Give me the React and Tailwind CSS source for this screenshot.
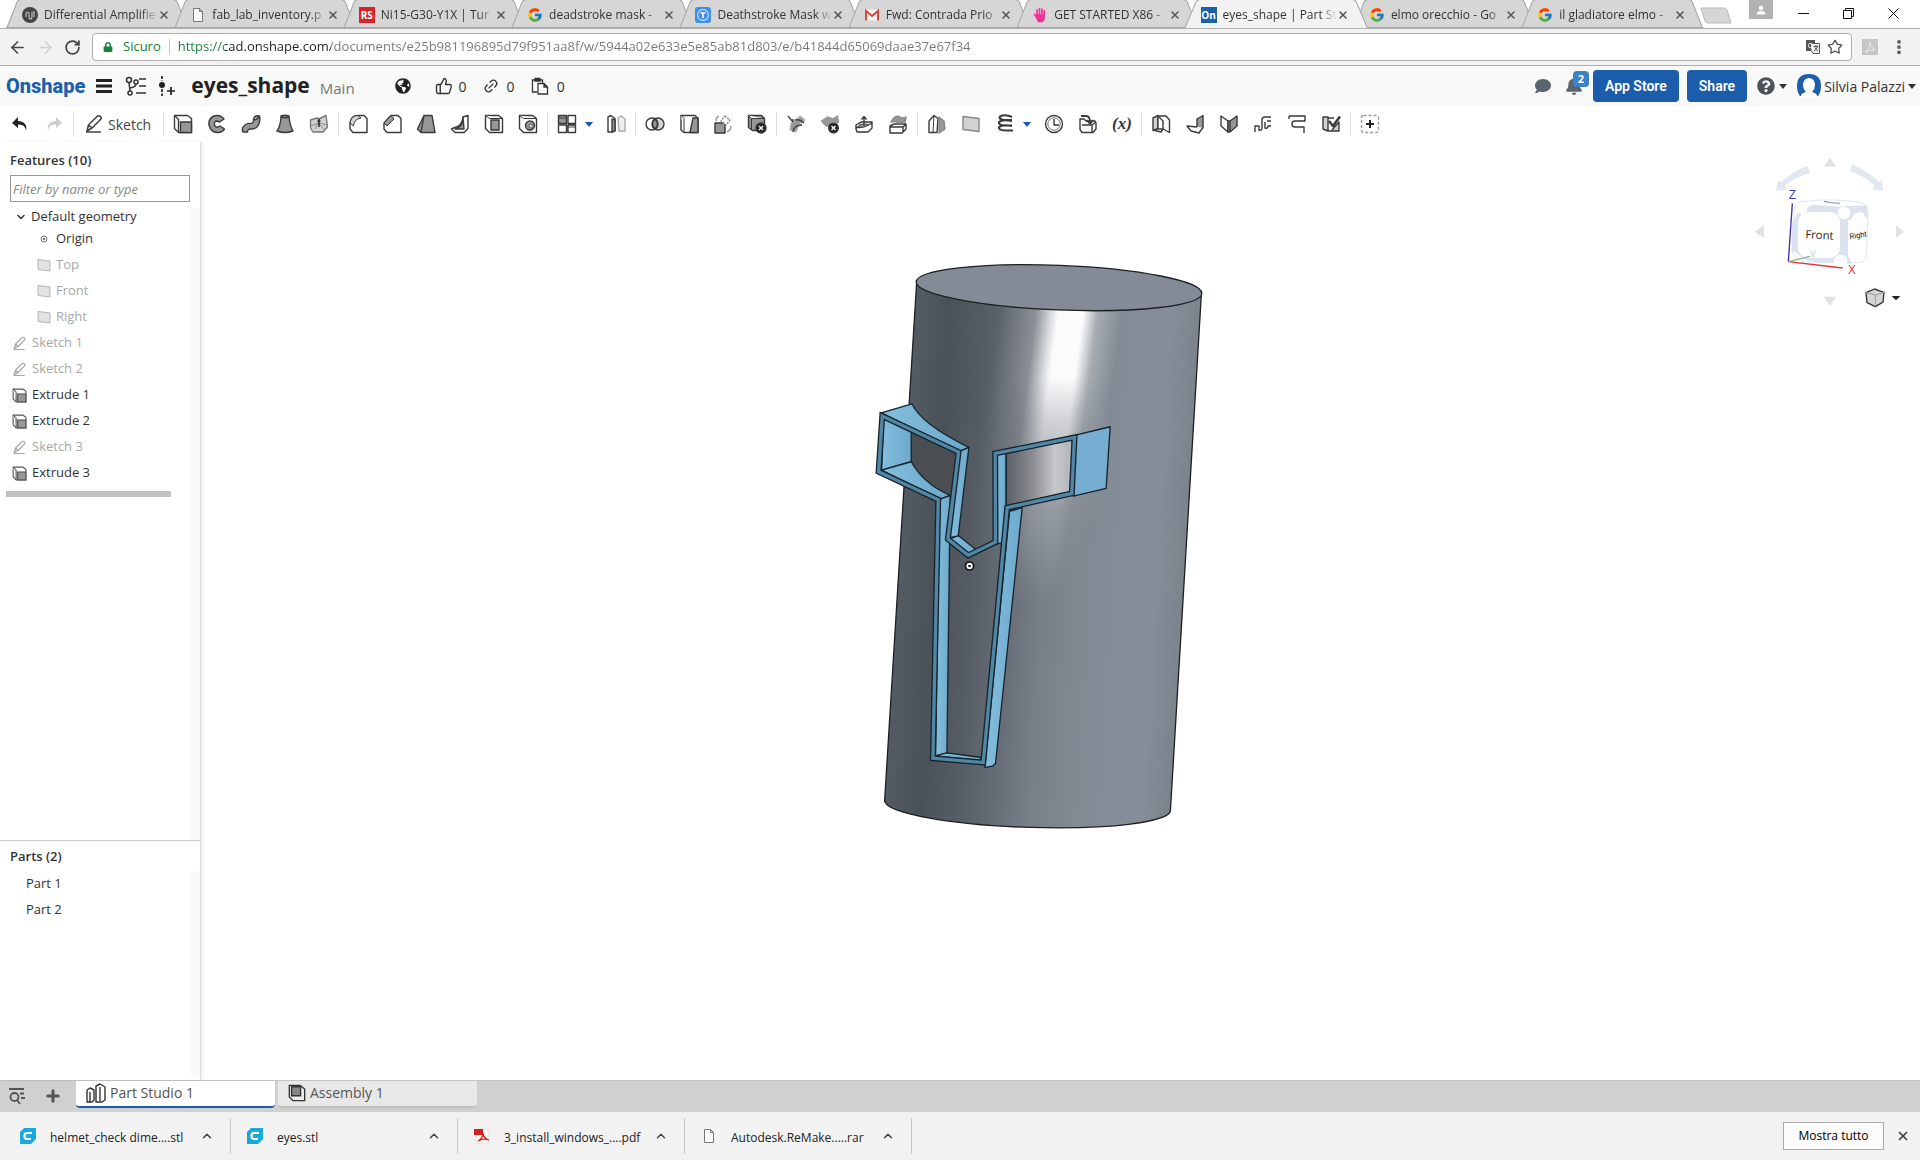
import React from "react";
import { FcGoogle } from "react-icons/fc";
import { FaGlobeAmericas, FaComment, FaBell, FaQuestionCircle, FaLock } from "react-icons/fa";
import { ArrowLeft, ArrowRight, RotateCw, Star, X, EllipsisVertical, ChevronUp, ChevronDown, Link2, Plus, ThumbsUp } from "lucide-react";

/* ---------- Browser chrome ---------- */

const PageIcon = () => (
  <svg viewBox="0 0 16 16" className="size-4 shrink-0" fill="#fafafa" stroke="#777" strokeWidth="1">
    <path d="M3.5 1.5h6l3 3v10h-9zM9.5 1.5v3h3" />
  </svg>
);
const WaveIcon = () => (
  <svg viewBox="0 0 16 16" className="size-4 shrink-0">
    <circle cx="8" cy="8" r="8" fill="#444" />
    <path d="M4 10V7q0-2 1.500-2T7 7v3q0 2 1.500 2T10 10V5M12 4v6" fill="none" stroke="#ccc" strokeWidth="1.1" />
  </svg>
);
const RsIcon = () => (
  <span className="flex size-4 shrink-0 items-center justify-center bg-[#d8232a] text-[10px] font-bold text-white">RS</span>
);
const ThingIcon = () => (
  <svg viewBox="0 0 16 16" className="size-4 shrink-0">
    <rect width="16" height="16" rx="3" fill="#3f8fe8" />
    <circle cx="8" cy="8" r="5.4" fill="none" stroke="#cfe4fb" strokeWidth="1.1" />
    <path d="M5.5 6h5M8 6v5" stroke="#fff" strokeWidth="1.6" />
  </svg>
);
const MailIcon = () => (
  <svg viewBox="0 0 16 16" className="size-4 shrink-0">
    <rect x="1" y="2.500" width="14" height="11" fill="#f2f2f2" />
    <path d="M2 13.500V4l6 5 6-5v9.500" fill="none" stroke="#d8473a" strokeWidth="2" />
  </svg>
);
const HandIcon = () => (
  <svg viewBox="0 0 16 16" className="size-4 shrink-0" stroke="#f0309a" strokeWidth="1.700" strokeLinecap="round" fill="#f0309a">
    <path d="M5 8V3M7.500 7V1.500M10 7V2M12.300 8V3.500M2.500 7.500L5 11" />
    <path d="M5 8h7v3.500l-1.500 3h-4L5 11z" />
  </svg>
);
const OnIcon = () => (
  <span className="flex size-4 shrink-0 items-center justify-center bg-[#1b5fa8] text-[10px] font-bold text-white">On</span>
);
const GoogleIcon = () => <FcGoogle className="size-4 shrink-0" />;

const browserTabs = [
  { icon: WaveIcon, title: "Differential Amplifie" },
  { icon: PageIcon, title: "fab_lab_inventory.p" },
  { icon: RsIcon, title: "Ni15-G30-Y1X | Tur" },
  { icon: GoogleIcon, title: "deadstroke mask -" },
  { icon: ThingIcon, title: "Deathstroke Mask w" },
  { icon: MailIcon, title: "Fwd: Contrada Prio" },
  { icon: HandIcon, title: "GET STARTED X86 -" },
  { icon: OnIcon, title: "eyes_shape | Part St", active: true },
  { icon: GoogleIcon, title: "elmo orecchio - Go" },
  { icon: GoogleIcon, title: "il gladiatore elmo -" },
];

function BrowserTab({ icon: Icon, title, active }) {
  return (
    <li className={active ? "relative z-10 h-7 min-w-0 flex-1" : "relative h-7 min-w-0 flex-1"}>
      <svg
        viewBox="0 0 182 28"
        preserveAspectRatio="none"
        className="absolute top-0 left-0 h-full w-[calc(100%+14px)]"
      >
        <path d="M0 28L11 2Q12 0 14 0H168Q170 0 171 2L182 28z" fill={active ? "#f2f2f2" : "#d6d6d6"} />
        <path
          d={active ? "M0 28L11 2Q12 0 14 0M168 0Q170 0 171 2L182 28" : "M0 27.500H182M1 28L11 2Q12 0 14 0M168 0Q170 0 171 2L181 28"}
          fill="none"
          stroke="#a8a8a8"
        />
      </svg>
      <div className="relative flex h-full items-center pl-4 pr-1 pt-0.5">
        <Icon />
        <span className="ml-1.5 min-w-0 flex-1 whitespace-nowrap text-[12px] text-[#333] [mask-image:linear-gradient(to_right,#000_85%,transparent)]">
          {title}
        </span>
        <button aria-label={"Close " + title} className="flex size-3 shrink-0 items-center justify-center text-[#555]">
          <X className="size-3" strokeWidth={3} />
        </button>
      </div>
    </li>
  );
}

function BrowserChrome() {
  return (
    <header className="shrink-0 bg-white">
      <div className="flex h-[29px] items-start border-b border-[#b0b0b0]">
        <ul className="flex h-7 w-[88%] pl-1.5">
          {browserTabs.map((t) => (
            <BrowserTab key={t.title} {...t} />
          ))}
        </ul>
        <button aria-label="New tab" className="ml-2.5 mt-[7px]">
          <svg viewBox="0 0 32 17" className="h-[17px] w-8">
            <path d="M1 1h23q2 0 3 2l4 13H8q-2 0-3-2z" fill="#d6d6d6" stroke="#b8b8b8" />
          </svg>
        </button>
        <div className="ml-auto flex items-start pr-1">
          <button aria-label="Account" className="mr-2 flex h-[19px] w-6 items-center justify-center bg-[#b2b2b2]">
            <svg viewBox="0 0 10 10" className="size-2.5" fill="#fff">
              <circle cx="5" cy="3" r="2.200" />
              <path d="M0.500 9.500q0-3.500 4.500-3.500t4.500 3.500z" />
            </svg>
          </button>
          {[
            ["Minimize", "M1 6.500H12"],
            ["Restore", "M1.500 3.500h8v8h-8zM3.500 3.500V1.500h8v8h-2"],
            ["Close", "M1.500 1.500l10 10M11.500 1.500l-10 10"],
          ].map(([label, d]) => (
            <button key={label} aria-label={label} className="flex h-[27px] w-[45px] items-center justify-center">
              <svg viewBox="0 0 13 13" className="size-[13px]" fill="none" stroke="#111">
                <path d={d} />
              </svg>
            </button>
          ))}
        </div>
      </div>
      <div className="flex h-[37px] items-center border-b border-[#b0b0b0] bg-[#f2f2f2] pl-2">
        <button aria-label="Back" className="w-7"><ArrowLeft className="size-[19px] text-[#444]" /></button>
        <button aria-label="Forward" className="w-7"><ArrowRight className="size-[19px] text-[#d0d0d0]" /></button>
        <button aria-label="Reload" className="w-7"><RotateCw className="size-[17px] text-[#444]" strokeWidth={2.5} /></button>
        <div className="flex h-7 flex-1 items-center rounded-sm border border-[#b0b0b0] bg-white pl-2.5 pr-1.5">
          <FaLock className="size-2.5 text-[#188038]" />
          <span className="ml-2.5 text-[13px] text-[#188038]">Sicuro</span>
          <span className="mx-2 h-4 w-px bg-[#ccc]" />
          <input
            aria-label="Address"
            readOnly
            value="https://cad.onshape.com/documents/e25b981196895d79f951aa8f/w/5944a02e633e5e85ab81d803/e/b41844d65069daae37e67f34"
            className="min-w-0 flex-1 bg-[linear-gradient(to_right,#188038_0,#188038_47px,#222_47px,#222_153px,#777_153px)] bg-clip-text text-[13px] text-transparent outline-none"
          />
          <svg viewBox="0 0 16 16" className="size-4">
            <rect x="1" y="1" width="9" height="11" fill="#555" />
            <path d="M6 4.500h8.500v10H8L6.500 12" fill="#eee" stroke="#555" />
            <path d="M8.500 7.500h5M11 6v1.500M12.500 7.500q-1 3-3.500 4.500M10 8.500q1 2.500 3 3.500" stroke="#555" fill="none" />
            <circle cx="5.500" cy="6.500" r="2.200" stroke="#eee" fill="none" />
          </svg>
          <button aria-label="Bookmark" className="mr-0.5 ml-1.5"><Star className="size-4 text-[#555]" /></button>
        </div>
        <button aria-label="Extension" className="ml-2.5 flex size-4 items-center justify-center bg-[#c6c6c6]">
          <svg viewBox="0 0 16 16" className="size-4" fill="none" stroke="#eee">
            <path d="M3 13q5-3 5-10q0 5 5 8q-5-1-10 2z" />
          </svg>
        </button>
        <button aria-label="Menu" className="mx-3"><EllipsisVertical className="size-[18px] text-[#555]" strokeWidth={3} /></button>
      </div>
    </header>
  );
}

/* ---------- Onshape header ---------- */

const Caret = ({ className = "" }) => (
  <svg viewBox="0 0 8 5" className={"h-[5px] w-2 shrink-0 " + className}>
    <path d="M0 0h8L4 5z" fill="currentColor" />
  </svg>
);

function DocHeader() {
  return (
    <div className="flex h-10 shrink-0 items-center bg-[#f8f8f8] pl-1.5 pr-1 text-[#333]">
      <a href="#home" className="text-[20px] font-extrabold text-[#1b5faa] font-[Roboto,sans-serif]">Onshape</a>
      <button aria-label="Main menu" className="ml-2.5">
        <svg viewBox="0 0 18 16" className="h-4 w-[18px]" stroke="#222" strokeWidth="3"><path d="M1 2.500H17M1 8H17M1 13.500H17" /></svg>
      </button>
      <button aria-label="Versions" className="ml-3">
        <svg viewBox="0 0 22 20" className="h-5 w-[22px]" fill="none" stroke="#333" strokeWidth="1.500">
          <circle cx="4" cy="4" r="2.500" /><circle cx="11" cy="6" r="2" /><circle cx="5" cy="17" r="2" />
          <path d="M4 6.500L5 15M11 8q0 3-6 4M14 3h7M14 10h7M11 17h10" />
        </svg>
      </button>
      <button aria-label="Create version" className="ml-2.5">
        <svg viewBox="0 0 18 20" className="h-5 w-[18px]" fill="none" stroke="#222" strokeWidth="1.700">
          <path d="M5 0v5M5 13v7" strokeDasharray="3 1.500" /><circle cx="5" cy="9" r="3" fill="#222" stroke="none" /><path d="M14 11v8M10 15h8" />
        </svg>
      </button>
      <h1 className="ml-4 text-[21px] font-bold text-[#222]">eyes_shape</h1>
      <span className="ml-2.5 pt-1 text-[15px] text-[#777]">Main</span>
      <FaGlobeAmericas className="ml-10 size-4 text-[#222]" />
      <button className="ml-6 flex items-center gap-1.5 text-[14px]"><ThumbsUp className="size-[18px]" strokeWidth={1.8} />0</button>
      <button className="ml-4 flex items-center gap-2 text-[14px]"><Link2 className="size-4 -rotate-45" />0</button>
      <button className="ml-4 flex items-center gap-2 text-[14px]">
        <svg viewBox="0 0 18 18" className="size-[18px]" fill="#fff" stroke="#333" strokeWidth="1.300">
          <path d="M6 15H1.500V3h10v3M4 1.500h5V4H4zM7 6.500h6l3.500 3.500v7H7zM13 6.500V10h3.500" />
        </svg>
        0
      </button>
      <div className="ml-auto flex items-center">
        <button aria-label="Comments"><FaComment className="h-4 w-5 text-[#59646f]" /></button>
        <button aria-label="Notifications" className="relative ml-3 mr-2.5">
          <FaBell className="size-[18px] text-[#59646f]" />
          <span className="absolute -top-1.5 left-2 flex h-4 w-4 items-center justify-center rounded-sm bg-[#3b82c8] text-[11px] font-bold text-white">2</span>
        </button>
        <button className="h-8 rounded bg-[#1b5cab] px-3 text-[14px] font-semibold whitespace-nowrap text-white font-[Roboto,sans-serif]">App Store</button>
        <button className="ml-2 h-8 rounded bg-[#1b5cab] px-3 text-[14px] font-semibold text-white font-[Roboto,sans-serif]">Share</button>
        <button aria-label="Help" className="ml-2.5 flex items-center gap-1"><FaQuestionCircle className="size-[18px] text-[#4a525a]" /><Caret className="text-[#333]" /></button>
        <button className="ml-2.5 flex items-center gap-[3px] text-[14px]">
          <svg viewBox="0 0 24 24" className="size-6">
            <path d="M3 22Q0 18 0 12 0 0 12 0t12 12q0 6-3 10z" fill="#1b5faa" />
            <path d="M4 24v-3q1-2 5-3-3-3-3-8 1-6 6-6t6 6q0 5-3 8 4 1 5 3v3z" fill="#fff" />
          </svg>
          <span className="whitespace-nowrap">Silvia Palazzi</span>
          <Caret />
        </button>
      </div>
    </div>
  );
}

/* ---------- Feature toolbar ---------- */

const G = "#979797";
const L = "#d2d2d2";
const glyphs = {
  Undo: <path d="M8 3L2 9l6 5v-3.500q7-.5 8 6Q18 8 8 7z" fill="#222" stroke="none" />,
  Redo: <path d="M12 3l6 6-6 5v-3.500q-7-.5-8 6Q2 8 12 7z" fill="#ccc" stroke="none" />,
  Extrude: <><path d="M1.500 1.500h13l4 3v14h-13l-4-4z" /><path d="M1.500 1.500l4 4V18" /><rect x="7.500" y="8" width="11" height="10.500" fill={G} /></>,
  Revolve: <path d="M17 5Q13 0 7 2 1 5 2 11q2 8 9 7.500 4 0 6.500-3.500L13 12q-4 3-5.500-1Q7 7 10 7l2.500 1z" fill={G} />,
  Sweep: <path d="M2 18q-2-4 2-7 2-2 5-1.500 4 0 3.500-4.500 1-4 6-3 1 5-1 9-2 4-7 4-4-.5-4 3zM12 5q3 2 6-2" fill={G} />,
  Loft: <path d="M6 2q4-1.500 8 0 .5 9 4 15-8 3-16 0 4-6 4-15zM6 3q4 1.500 8 0" fill={G} />,
  Thicken: <><path d="M1.500 6L8 4l2 1 7-3.500L18.500 13 14 18H4L1.500 14z" fill={L} stroke="#777" /><path d="M1.500 12l8-3 9 2M6 15l3-6 6 6" stroke="#888" strokeWidth="1" fill="none" /><path d="M10 5v8M8.500 7h3" stroke="#222" /></>,
  Fillet: <><path d="M2 9Q3 1.500 10 1.500h6l3 3V18.500H5L2 15z" /><path d="M2 9Q3 1.500 10 1.500L13 4Q6 5 5.500 12z" fill={L} strokeWidth="1" /></>,
  Chamfer: <><path d="M2 9l7-7.500h7l3 3V18.500H5L2 15z" /><path d="M2 9l7-7.500L12 5l-7 7z" fill={G} strokeWidth="1" /></>,
  Draft: <><path d="M8 1.500h8L19 18.500H5L1.500 15z" fill={G} /><path d="M8 1.500L5 18.500" /></>,
  Rib: <><path d="M13 3l5-1.500v13L14 18.500H5L1.500 15l3-1.500Q12 12 13 3z" /><path d="M13 3q1 9-8 12h9z" fill={G} /></>,
  Shell: <><path d="M1.500 1.500h13l4 3v14h-13l-4-4z" /><path d="M1.500 1.500l4 3h13" strokeWidth="1" /><rect x="7" y="6" width="8" height="10" fill={G} /></>,
  Hole: <><path d="M1.500 1.500h13l4 3v14h-13l-4-4z" /><path d="M1.500 1.500l4 3h13" strokeWidth="1" /><circle cx="12" cy="11.500" r="4.500" fill={G} /><circle cx="13" cy="12" r="2" fill={L} strokeWidth=".7" /></>,
  Pattern: <><path d="M1.500 1.500h8v8h-8z" fill={G} /><path d="M11 1.500h7.500v8H11zM1.500 11h8v7.500h-8zM11 11h7.500v7.500H11z" /><path d="M1.500 4H9.500M11 13H18.500" strokeWidth="1" /></>,
  Mirror: <><path d="M2 3l3-1.500 4 3v12L6 18H2z" fill="#fff" /><path d="M9 6v11l-3 1V5z" fill={G} /><path d="M12 4l3-2 4 3v12h-6z" stroke="#aaa" fill="#eee" /></>,
  Boolean: <><circle cx="13" cy="10" r="6" fill={L} /><circle cx="7" cy="10" r="6" fill="none" /><path d="M10 5q-5 5 0 10 5-5 0-10z" fill={G} /></>,
  Split: <><path d="M2 1.500h14l3 3v14H5L2 16z" /><path d="M14 4h5v14.500h-8z" fill={G} /><path d="M2 1.500l3 3V18" strokeWidth="1" /></>,
  Transform: <><rect x="2" y="9" width="10" height="10" fill={G} /><path d="M12 2l5 4-4 5-5-4z" fill="#fff" stroke="#888" strokeDasharray="2 1" /><path d="M3 7q0-4 3-5M18 12q0 4-4 6" stroke="#999" /></>,
  Delete: <><path d="M1.500 1.500h13l3 3v12h-12l-4-3z" fill={G} /><path d="M1.500 1.500l3 3h13M4.500 5v11" strokeWidth="1" /><circle cx="14" cy="14" r="5" fill="#222" /><path d="M12 12l4 4M16 12l-4 4" stroke="#fff" /></>,
  ModifyFillet: <><path d="M5 9l5-3 4-4 5 4-6 5-3 7-6-2z" fill={G} stroke="#bbb" /><path d="M2 2l5 6M7 8V5M9 6q5-1 9 3M7 18q1-7 9-7" stroke="#444" fill="none" /></>,
  DeleteFace: <><path d="M1.500 7l6-4 5 2 5-3 1 6-5 4H6z" fill={G} stroke="#999" /><circle cx="13.500" cy="14" r="4.800" fill="#222" /><path d="M11.500 12l4 4M15.500 12l-4 4" stroke="#fff" /></>,
  MoveFace: <><path d="M2 11l5-3h11v6l-4 4H3l-1-3zM2 13q6 2 16-4" fill="#fff" /><path d="M6 10h8l-3 3H4z" fill={G} strokeWidth=".7" /><path d="M10 12V3M7.500 5.500L10 2.500l2.500 3" fill="none" /></>,
  ReplaceFace: <><path d="M2 12l4-2h12v5l-4 4H2zM2 13h13l3-3M15 13v5" fill="#fff" /><path d="M3 8q4-8 9-5 3 2 6 0l-1 5q-5 2-8 0-3-1-6 0z" fill={G} stroke="#888" /></>,
  Offset: <><path d="M2 7l5-5.500 4 3-1 14H2z" fill="#fff" /><path d="M7 1.500L6 18" strokeWidth="1" /><path d="M12 3l5 4 1 8-6 4z" fill={G} stroke="#888" /></>,
  Plane: <path d="M2 2.500l16 2v13l-16-2z" fill={L} stroke="#888" />,
  Helix: <path d="M17 3Q10 0 5 2.500 3 5 9 6h8M17 7Q7 5 4 8q-1 3 6 3.500h7M17 12q-9-2-13 1-1 3 6 3.500h8" strokeWidth="2" fill="none" />,
  Curve: <><circle cx="10" cy="10" r="8.500" /><circle cx="10" cy="10" r="6.200" strokeWidth=".7" /><path d="M10 5v6h5" fill="none" /></>,
  Import: <><path d="M2 5h4l2 2h9l1 2v6l-3 3.500H4l-2-3z" fill="#fff" /><path d="M4 11h10v7M14 11l4-3" fill="none" /><path d="M3 2h5q4 0 4 6M9 6l3 4 3-4" fill="none" strokeWidth="1.800" /></>,
  Variable: null,
  SheetMetal: <><path d="M2 4l5-2.500v13l-5 2z" fill={L} /><path d="M7 2h8l3.500 4v12.500L12 15H7z" /><path d="M8 3l4 4v8M2 16l8 2 2-3" fill="none" /></>,
  Flange: <><path d="M12 5l6-3.500v12l-6 3z" fill={G} /><path d="M12 13L2 12l4 5 8 2 4-5.500" fill="#fff" /></>,
  Hem: <><path d="M2 2l7 5v11l-7-6z" fill="#fff" /><path d="M18 2l-7 5v11l7-6zM9 7h2v11H9z" fill={G} /></>,
  Tab: <path d="M2 18v-6h4v4q3 1 3-2V6q0-3 3-3h6M12 8v6q3 1 3-2h3M14 7h4" fill="none" />,
  Bend: <path d="M2 2h16v5H8q-3 0-3 3t3 3h9v6M2 2v3" fill="none" />,
  Finish: <><path d="M2 3h5v14l-5-2zM7 4h6M7 17h11V8l-7 8" fill={L} /><path d="M8 7l4 5 7-9.500" strokeWidth="2.500" fill="none" /></>,
  Add: <><rect x="1.500" y="1.500" width="17" height="17" rx="2" stroke="#999" strokeDasharray="3 2" /><path d="M10 6v8M6 10h8" stroke="#222" strokeWidth="2" /></>,
};

function ToolButton({ name }) {
  return (
    <button aria-label={name} className="flex h-8 w-[34px] shrink-0 items-center justify-center">
      {name === "Variable" ? (
        <span className="text-[17px] font-bold italic text-[#333] font-['Liberation_Serif',serif]">(x)</span>
      ) : (
        <svg viewBox="0 0 20 20" className="size-5" fill="#fff" stroke="#3a3a3a" strokeWidth="1.400" strokeLinejoin="round">
          {glyphs[name]}
        </svg>
      )}
    </button>
  );
}

const groups = [
  ["Extrude", "Revolve", "Sweep", "Loft", "Thicken"],
  ["Fillet", "Chamfer", "Draft", "Rib", "Shell", "Hole"],
  ["Pattern", "v", "Mirror"],
  ["Boolean", "Split", "Transform", "Delete"],
  ["ModifyFillet", "DeleteFace", "MoveFace", "ReplaceFace"],
  ["Offset", "Plane", "Helix", "v", "Curve", "Import", "Variable"],
  ["SheetMetal", "Flange", "Hem", "Tab", "Bend", "Finish"],
  ["Add"],
];

const PencilGlyph = ({ className }) => (
  <svg viewBox="0 0 20 20" className={className} fill="none" stroke="currentColor" strokeWidth="1.600" strokeLinejoin="round">
    <path d="M3 17l1.500-6L13 2.500q2-1.500 3.500 0t0 3L8 14zM4.500 11L8 14M2 18h15" />
  </svg>
);

function Toolbar() {
  return (
    <div className="flex h-9 shrink-0 items-center bg-white pl-[3px]">
      <ToolButton name="Undo" />
      <ToolButton name="Redo" />
      <span className="mx-0.5 h-6 w-px bg-[#ddd]" />
      <button className="flex h-8 w-[85px] items-center gap-1 pl-2 text-[14px] text-[#444]">
        <PencilGlyph className="size-5" />
        Sketch
      </button>
      {groups.map((g, i) => (
        <div key={i} className="flex items-center">
          <span className="mx-0.5 h-6 w-px bg-[#ddd]" />
          {g.map((n) =>
            n === "v" ? (
              <button key={n} aria-label="More" className="mr-[5px] flex h-8 w-2.5 items-center justify-center text-[#1b54c4]"><Caret /></button>
            ) : (
              <ToolButton key={n} name={n} />
            )
          )}
        </div>
      ))}
    </div>
  );
}

/* ---------- Feature list ---------- */

const PlaneGlyph = () => (
  <svg viewBox="0 0 14 14" className="size-3.5"><path d="M1 1.500l12 1.500v10L1 11.500z" fill="#e2e2e2" stroke="#b5b5b5" /></svg>
);
const ExtrudeGlyph = () => (
  <svg viewBox="0 0 20 20" className="size-[15px]" fill="#fff" stroke="#555" strokeWidth="1.500">{glyphs.Extrude}</svg>
);

const features = [
  ["sketch", "Sketch 1"],
  ["sketch", "Sketch 2"],
  ["extrude", "Extrude 1"],
  ["extrude", "Extrude 2"],
  ["sketch", "Sketch 3"],
  ["extrude", "Extrude 3"],
];

function Sidebar() {
  return (
    <aside className="relative z-10 flex w-[201px] shrink-0 flex-col border-r border-[#ddd] bg-white text-[13px] text-[#333] shadow-[2px_0_3px_rgba(0,0,0,0.08)]">
      <section className="flex flex-1 flex-col">
        <h2 className="pl-2.5 pt-2 text-[13px] leading-5 font-semibold">Features (10)</h2>
        <div className="px-2.5 pt-[5px] pb-1.5">
          <input
            aria-label="Filter"
            placeholder="Filter by name or type"
            className="block h-[27px] w-full border border-[#999] px-0.5 text-[13px] italic outline-none placeholder:text-[#888]"
          />
        </div>
        <div className="flex-1 border-r-[9px] border-[#fafafa]">
          <button className="flex h-[18px] items-center gap-1 pl-[15px]"><ChevronDown className="size-3" strokeWidth={3} />Default geometry</button>
          <ul>
            <li className="flex h-[26px] items-center gap-[5px] pl-[37px]">
              <span className="flex w-3.5 justify-center"><svg viewBox="0 0 8 8" className="size-2"><circle cx="4" cy="4" r="3" fill="#fff" stroke="#777" /><circle cx="4" cy="4" r="1.300" fill="#777" /></svg></span>
              Origin
            </li>
            {["Top", "Front", "Right"].map((n) => (
              <li key={n} className="flex h-[26px] items-center gap-[5px] pl-[37px] text-[#a8a8a8]"><PlaneGlyph />{n}</li>
            ))}
            {features.map(([kind, n]) => (
              <li key={n} className={kind === "extrude" ? "flex h-[26px] items-center gap-[5px] pl-3" : "flex h-[26px] items-center gap-[5px] pl-3 text-[#a8a8a8]"}>
                {kind === "extrude" ? <ExtrudeGlyph /> : <PencilGlyph className="size-[15px]" />}
                {n}
              </li>
            ))}
          </ul>
          <div className="ml-1.5 mr-5 mt-[5px] h-1.5 bg-[#c2c2c2]" />
        </div>
      </section>
      <section className="flex h-[240px] flex-col border-t border-[#ccc]">
        <h2 className="pl-2.5 pt-[5px] pb-[5px] text-[13px] leading-5 font-semibold">Parts (2)</h2>
        <ul className="mb-1 flex-1 border-r-[9px] border-[#fafafa] pl-[26px]">
          <li className="flex h-[26px] items-center">Part 1</li>
          <li className="flex h-[26px] items-center">Part 2</li>
        </ul>
      </section>
    </aside>
  );
}

/* ---------- 3D view ---------- */

function Model() {
  const frame =
    "M68 528L57 695L236 779L220 1555L371 1568L443 803L637 760L645 592L407 640L408 906L326 946L265 897L297 636Z";
  return (
    <svg viewBox="201 142 1720 938" className="h-full w-full" role="img" aria-label="eyes_shape model">
      <defs>
        <linearGradient id="body" gradientUnits="userSpaceOnUse" x1="917" y1="283" x2="1201" y2="300">
          <stop offset="0" stopColor="#545b62" /><stop offset=".12" stopColor="#4b5158" /><stop offset=".24" stopColor="#555b63" />
          <stop offset=".38" stopColor="#666c75" /><stop offset=".5" stopColor="#777e87" /><stop offset=".62" stopColor="#808791" />
          <stop offset=".78" stopColor="#858d98" /><stop offset=".9" stopColor="#858d98" /><stop offset="1" stopColor="#7b838d" />
        </linearGradient>
        <linearGradient id="shine" gradientUnits="userSpaceOnUse" x1="1000" y1="308" x2="1122" y2="324">
          <stop offset="0" stopColor="#fff" stopOpacity="0" /><stop offset=".3" stopColor="#fff" stopOpacity=".22" />
          <stop offset=".48" stopColor="#fff" stopOpacity=".97" /><stop offset=".68" stopColor="#fff" stopOpacity=".97" />
          <stop offset=".8" stopColor="#fff" stopOpacity=".3" /><stop offset="1" stopColor="#fff" stopOpacity="0" />
        </linearGradient>
        <linearGradient id="fade" x1="0" y1="0" x2="0" y2="1">
          <stop offset="0" stopColor="#fff" /><stop offset=".28" stopColor="#fff" /><stop offset=".42" stopColor="#aaa" /><stop offset=".7" stopColor="#3a3a3a" /><stop offset="1" stopColor="#000" />
        </linearGradient>
        <mask id="shineMask"><rect x="960" y="290" width="220" height="310" fill="url(#fade)" /></mask>
        <linearGradient id="wall" x1="0" y1="0" x2="1" y2="0"><stop offset="0" stopColor="#84bedd" /><stop offset="1" stopColor="#6da9cc" /></linearGradient>
        <linearGradient id="slot" x1="0" y1="0" x2="1" y2="0"><stop offset="0" stopColor="#5b5f65" /><stop offset=".4" stopColor="#8a8d92" /><stop offset=".72" stopColor="#c6c8ca" /><stop offset="1" stopColor="#b0b3b7" /></linearGradient>
      </defs>
      <path d="M917 283L885 801A143 22 2 0 0 1171 810L1202 293z" fill="url(#body)" />
      <path d="M930 290L925 600H1180L1185 305Q1100 315 930 290z" fill="url(#shine)" mask="url(#shineMask)" />
      <path d="M917 283L885 801A143 22 2 0 0 1171 810L1202 293" fill="none" stroke="#1c1f23" strokeWidth="1.300" />
      <ellipse cx="1059.500" cy="287.500" rx="143" ry="22.300" transform="rotate(2.300 1059.500 287.500)" fill="#848b96" stroke="#1c1f23" strokeWidth="1.300" />
      <g transform="translate(860 240) scale(.33333)" stroke="#16242e" strokeWidth="4" strokeLinejoin="round" fill="url(#wall)">
        <path d="M157 572L290 640L272 765Q190 735 155 665z" fill="#4b4f54" stroke="none" />
        <path d="M65 518L157 491Q185 552 328 622L300 634z" />
        <path d="M72 535L155 570V665L66 690z" />
        <path d="M66 690L155 665Q190 730 272 766L240 778z" />
        <path d="M300 634L328 622L296 888L268 893z" />
        <path d="M268 897L297 887L355 933L325 946z" />
        <path d="M407 645L440 636V800L430 908L408 912z" />
        <path d="M440 640L642 595L635 755L440 798z" fill="url(#slot)" />
        <path d="M648 585L752 560L740 745L642 768z" fill="#76add0" />
        <path d="M450 814L488 803L408 1570L400 1578L376 1583z" />
        <path d="M240 778L272 766L262 1540L228 1548z" />
        <path d="M228 1548L262 1539L362 1552L366 1562z" />
        <path d={frame} fill="none" stroke="#16242e" strokeWidth="18" strokeLinejoin="miter" />
        <path d={frame} fill="none" stroke="#5187a5" strokeWidth="10" strokeLinejoin="miter" />
        <circle cx="330" cy="978" r="12" fill="#fff" stroke="#111" strokeWidth="5" />
        <circle cx="330" cy="978" r="4" fill="#111" stroke="none" />
      </g>
    </svg>
  );
}

function ViewCube() {
  return (
    <svg viewBox="0 6 600 534" className="absolute top-0 right-0 h-[178px] w-[200px]" role="img" aria-label="View cube">
      <g fill="#e2e7f0">
        <path d="M262 78L270 98Q225 112 196 136L200 150L168 152L174 122L184 126Q215 95 262 78z" />
        <path d="M396 74L390 94Q430 106 462 136L458 150L490 152L486 120L476 126Q445 92 396 74z" />
      </g>
      <g fill="#e0e2e6">
        <path d="M312 80L330 52L348 80zM312 470L330 498L348 470zM132 256V294L104 275zM528 256V294L552 275z" />
      </g>
      <path d="M240 186Q330 172 425 188Q445 196 444 215L440 345Q438 362 420 368L250 366Q218 350 216 330L222 210Q224 192 240 186z" fill="#fff" stroke="#e2e6ee" strokeWidth="3" />
      <path d="M278 194L360 200L380 198L440 196L443 235L385 240L384 345L395 372L262 364L216 330V250L232 218z" fill="#dde3ee" />
      <rect x="234" y="216" width="126" height="138" rx="30" fill="#fff" />
      <path d="M392 246Q396 220 418 216Q436 216 438 240L434 330Q430 354 404 362Q388 364 388 345z" fill="#fff" />
      <circle cx="372" cy="219" r="19" fill="#fff" /><circle cx="362" cy="364" r="20" fill="#fff" />
      <circle cx="246" cy="206" r="16" fill="#fff" />
      <path d="M312 184Q335 190 360 190" stroke="#8a8a8a" strokeWidth="3" fill="none" />
      <text x="256" y="297" fontSize="34" fill="#222" transform="rotate(3 296 285)">Front</text>
      <text x="389" y="294" fontSize="23" fill="#222" transform="rotate(-10 412 290)" className="font-[Roboto,sans-serif]">Right</text>
      <g strokeWidth="4" fill="none">
        <path d="M205 365L217 190" stroke="#3a34b4" /><path d="M205 365L368 384" stroke="#e03434" /><path d="M205 365L270 349" stroke="#7fb98a" />
      </g>
      <g fontSize="38"><text x="206" y="178" fill="#3a34b4">Z</text><text x="385" y="402" fill="#e03434">X</text><text x="271" y="358" fontSize="30" fill="#b9dcc0">Y</text></g>
      <path d="M438 458L464 447L492 457L489 486L466 500L441 488z" fill="#d5d5d5" stroke="#333" strokeWidth="4" />
      <path d="M438 458L466 465L492 457M466 465V500" stroke="#999" strokeWidth="3" fill="none" />
      <path d="M515 468H541L528 481z" fill="#222" />
    </svg>
  );
}

/* ---------- Bottom bars ---------- */

function StudioTabs() {
  return (
    <nav className="flex h-8 shrink-0 items-start border-t border-[#c4c4c4] bg-[#d0d0d0] text-[14px] text-[#555]">
      <button aria-label="Search tabs" className="mt-1.5 ml-2">
        <svg viewBox="0 0 18 18" className="size-[18px]" fill="none" stroke="#555" strokeWidth="1.800">
          <path d="M1 2h15M12 6.500h4M13 11h4M9 13l3 4" /><circle cx="6.500" cy="10" r="4" />
        </svg>
      </button>
      <button aria-label="New" className="mt-1.5 ml-[18px]"><Plus className="size-[18px]" strokeWidth={4} /></button>
      <button className="ml-3.5 flex h-[27px] w-[199px] items-center gap-1 rounded-b border-b-2 border-[#1b5faa] bg-white pb-0.5 pl-2.5">
        <svg viewBox="0 0 20 20" className="size-5" fill="#fff" stroke="#333" strokeWidth="1.400" strokeLinejoin="round">
          <path d="M1 7l3-2 4 2v10l-2 2H1zM4 9v10M10 3l4-2 5 3v13l-3 2h-6zM14 4v14" />
        </svg>
        Part Studio 1
      </button>
      <button className="ml-[3px] flex h-[27px] w-[199px] items-center gap-1 rounded-b border-b-2 border-[#c0c0c0] bg-[#e8e8e8] pb-0.5 pl-2.5">
        <svg viewBox="0 0 20 20" className="size-[18px]" stroke="#333" strokeWidth="1.500" fill="#eee">
          <path d="M1.500 1.500h12l5 4v13h-13l-4-4z" /><path d="M4 3h10v10H4z" fill="#888" />
        </svg>
        Assembly 1
      </button>
    </nav>
  );
}

const CuraIcon = () => (
  <svg viewBox="0 0 16 16" className="size-4 shrink-0">
    <path d="M4 0h12v11l-5 5H0V4z" fill="#1aa9dc" />
    <path d="M12 5H7Q4.500 5 4.500 8T7 11h4" fill="none" stroke="#fff" strokeWidth="2.200" />
  </svg>
);
const PdfIcon = () => (
  <svg viewBox="0 0 16 16" className="size-4 shrink-0">
    <path d="M2 1h10l3 3v11H2z" fill="#fff" stroke="#ddd" /><path d="M0 1h9v6H0z" fill="#d81f1f" /><path d="M4 13q5-3 5-8 0 5 6 7-6-2-11 1z" fill="none" stroke="#d81f1f" strokeWidth="1.300" />
  </svg>
);
const downloads = [
  [CuraIcon, "helmet_check dime....stl"],
  [CuraIcon, "eyes.stl"],
  [PdfIcon, "3_install_windows_....pdf"],
  [PageIcon, "Autodesk.ReMake.....rar"],
];

function Downloads() {
  return (
    <footer className="flex h-12 shrink-0 items-center bg-[#f2f2f2] text-[12px] text-[#222]">
      <ul className="flex pl-1">
        {downloads.map(([Icon, name]) => (
          <li key={name} className="flex h-9 w-[227px] items-center border-r border-[#c8c8c8] pl-4 pr-4">
            <Icon />
            <span className="ml-3.5 flex-1 pt-1 whitespace-nowrap">{name}</span>
            <button aria-label={"Options for " + name}><ChevronUp className="size-3.5 text-[#444]" strokeWidth={2.5} /></button>
          </li>
        ))}
      </ul>
      <button className="ml-auto h-7 w-[101px] border border-[#aaa] bg-[#fcfcfc] text-[12px] text-black">Mostra tutto</button>
      <button aria-label="Close downloads" className="mr-2.5 ml-3"><X className="size-3.5 text-[#444]" strokeWidth={3} /></button>
    </footer>
  );
}

export default function App() {
  return (
    <div className="flex h-screen flex-col overflow-hidden bg-white font-['Open_Sans','Noto_Sans',sans-serif]">
      <BrowserChrome />
      <DocHeader />
      <Toolbar />
      <div className="flex min-h-0 flex-1">
        <Sidebar />
        <main className="relative min-w-0 flex-1">
          <Model />
          <ViewCube />
        </main>
      </div>
      <StudioTabs />
      <Downloads />
    </div>
  );
}
